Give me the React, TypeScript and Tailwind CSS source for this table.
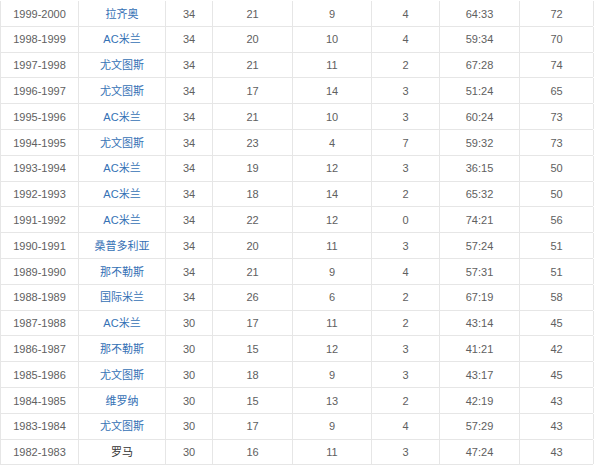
import React from "react"

type Row = [string, string, number, number, number, number, string, number]

const rows: Row[] = [
  ["1999-2000", "拉齐奥", 34, 21, 9, 4, "64:33", 72],
  ["1998-1999", "AC米兰", 34, 20, 10, 4, "59:34", 70],
  ["1997-1998", "尤文图斯", 34, 21, 11, 2, "67:28", 74],
  ["1996-1997", "尤文图斯", 34, 17, 14, 3, "51:24", 65],
  ["1995-1996", "AC米兰", 34, 21, 10, 3, "60:24", 73],
  ["1994-1995", "尤文图斯", 34, 23, 4, 7, "59:32", 73],
  ["1993-1994", "AC米兰", 34, 19, 12, 3, "36:15", 50],
  ["1992-1993", "AC米兰", 34, 18, 14, 2, "65:32", 50],
  ["1991-1992", "AC米兰", 34, 22, 12, 0, "74:21", 56],
  ["1990-1991", "桑普多利亚", 34, 20, 11, 3, "57:24", 51],
  ["1989-1990", "那不勒斯", 34, 21, 9, 4, "57:31", 51],
  ["1988-1989", "国际米兰", 34, 26, 6, 2, "67:19", 58],
  ["1987-1988", "AC米兰", 30, 17, 11, 2, "43:14", 45],
  ["1986-1987", "那不勒斯", 30, 15, 12, 3, "41:21", 42],
  ["1985-1986", "尤文图斯", 30, 18, 9, 3, "43:17", 45],
  ["1984-1985", "维罗纳", 30, 15, 13, 2, "42:19", 43],
  ["1983-1984", "尤文图斯", 30, 17, 9, 4, "57:29", 43],
  ["1982-1983", "罗马", 30, 16, 11, 3, "47:24", 43],
]

const cell = "flex items-center justify-center pt-px border-r border-[#e6e6e6]"

export default function App() {
  return (
    <div
      className="w-[600px] h-[470px] bg-white overflow-hidden text-[11px] text-[#606060]"
      style={{ fontFamily: '"Liberation Sans", Arial, "Noto Sans CJK SC", sans-serif' }}
    >
      <div className="w-[593px] mt-px border-l border-[#e6e6e6]">
        {rows.map((r) => (
          <div
            key={r[0]}
            className="grid grid-cols-[78px_87px_47px_80px_79px_68px_80px_74px] h-[25.8px] border-b border-[#e6e6e6]"
          >
            <div className={cell}>{r[0]}</div>
            <div className={cell}>
              <span className={r[1] === "罗马" ? "text-[#333]" : "text-[#3571b5]"}>{r[1]}</span>
            </div>
            <div className={cell}>{r[2]}</div>
            <div className={cell}>{r[3]}</div>
            <div className={cell}>{r[4]}</div>
            <div className={cell}>{r[5]}</div>
            <div className={cell}>{r[6]}</div>
            <div className={cell}>{r[7]}</div>
          </div>
        ))}
      </div>
    </div>
  )
}
